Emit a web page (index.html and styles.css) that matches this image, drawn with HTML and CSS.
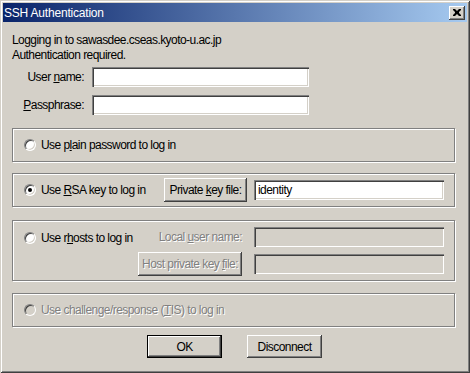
FILE: index.html
```html
<!DOCTYPE html>
<html>
<head>
<meta charset="utf-8">
<link rel="stylesheet" href="styles.css">
</head>
<body>
<div class="window">
  <div class="titlebar">
    <span class="title">SSH Authentication</span>
    <span class="close"><svg width="8" height="7" viewBox="0 0 8 7"><path d="M0 0h2l2 2 2-2h2v1l-2 2v1l2 2v1h-2l-2-2-2 2h-2v-1l2-2v-1l-2-2z" fill="#000"/></svg></span>
  </div>
  <div class="content">
    <div class="info">
      <div>Logging in to sawasdee.cseas.kyoto-u.ac.jp</div>
      <div>Authentication required.</div>
    </div>
    <div class="fields">
      <label class="flabel">User <u>n</u>ame:</label><div class="input"></div>
      <label class="flabel"><u>P</u>assphrase:</label><div class="input"></div>
    </div>
    <div class="group g1">
      <div class="radio-row"><span class="radio"></span><span>Use p<u>l</u>ain password to log in</span></div>
    </div>
    <div class="group g2">
      <div class="radio-row"><span class="radio checked"></span><span>Use <u>R</u>SA key to log in</span></div>
      <div class="g2-right">
        <div class="btn pk"><span>Private <u>k</u>ey file:</span></div>
        <div class="input val">identity</div>
      </div>
    </div>
    <div class="group g3">
      <div class="radio-row rh"><span class="radio"></span><span>Use r<u>h</u>osts to log in</span></div>
      <div class="rh-right">
        <div class="rh-line"><span class="dis lun">Local <u>u</u>ser name:</span><div class="input disabled"></div></div>
        <div class="rh-line"><div class="btn hpk dis"><span>Host private key <u>f</u>ile:</span></div><div class="input disabled"></div></div>
      </div>
    </div>
    <div class="group g4">
      <div class="radio-row"><span class="radio disabledr"></span><span class="dis">Use challenge/response (<u>T</u>IS) to log in</span></div>
    </div>
    <div class="buttons">
      <div class="btn big default"><span>OK</span></div>
      <div class="btn big"><span>Disconnect</span></div>
    </div>
  </div>
</div>
</body>
</html>
```
FILE: styles.css
```css
* { box-sizing: border-box; }
html, body { margin: 0; padding: 0; }
body {
  width: 470px; height: 373px; overflow: hidden;
  font-family: "Liberation Sans", Arial, sans-serif;
  font-size: 12px; color: #000; letter-spacing: -0.55px;
  white-space: nowrap;
}
.window {
  width: 470px; height: 373px;
  background: #d4d0c8;
  box-shadow: inset 1px 1px #d4d0c8, inset -1px -1px #404040, inset 2px 2px #fff, inset -2px -2px #808080;
  padding: 3px 3px 0 3px;
}
.titlebar {
  height: 19px;
  background: linear-gradient(to right, #0a246a, #a6caf0);
  display: flex; align-items: center; justify-content: space-between;
  padding: 0 2px 0 1px;
}
.title { color: #fff; font-size: 12px; letter-spacing: -0.2px; }
.close {
  width: 16px; height: 14px; background: #d4d0c8;
  box-shadow: inset -1px -1px #404040, inset 1px 1px #fff, inset -2px -2px #808080;
  display: flex; align-items: center; justify-content: center; padding-bottom: 1px;
}
.close svg { display: block; }
.content { padding: 0 0 0 9px; }
.info { padding-top: 11px; line-height: 15px; }
.fields {
  display: grid; grid-template-columns: 72px 217px; column-gap: 8px; row-gap: 8px;
  margin-top: 4px; align-items: center;
}
.flabel { text-align: right; }
.input {
  height: 20px; background: #fff;
  box-shadow: inset 1px 1px #808080, inset 2px 2px #404040, inset -1px -1px #fff, inset -2px -2px #d4d0c8;
  padding: 3px 4px; line-height: 14px;
}
.input.disabled { background: #d4d0c8; }
.group {
  width: 443px;
  border: 1px solid #808080;
  box-shadow: inset 1px 1px #fff, 1px 1px #fff;
  padding: 0 10px 0 11px;
}
.g1 { margin-top: 13px; height: 34px; display: flex; align-items: center; }
.g2 { margin-top: 11px; height: 34px; display: flex; align-items: center; justify-content: space-between; }
.g2-right { display: flex; align-items: center; gap: 7px; }
.g3 { margin-top: 13px; height: 61px; display: flex; justify-content: space-between; }
.g4 { margin-top: 12px; height: 34px; display: flex; align-items: center; }
.radio-row { display: flex; align-items: center; gap: 5px; }
.rh { align-self: flex-start; margin-top: 10px; }
.radio {
  width: 12px; height: 12px; border-radius: 50%; flex: none;
  background: #fff; position: relative;
  border: 1px solid; border-color: #808080 #fff #fff #808080;
  box-shadow: inset 1px 1px #404040, inset -1px -1px #d4d0c8;
}
.radio.checked::after {
  content: ""; position: absolute; left: 3px; top: 3px; width: 4px; height: 4px;
  border-radius: 50%; background: #000;
}
.radio.disabledr { background: #d4d0c8; }
.btn {
  background: #d4d0c8; display: flex; align-items: center; justify-content: center;
  box-shadow: inset -1px -1px #404040, inset 1px 1px #fff, inset -2px -2px #808080;
}
.pk { width: 83px; height: 24px; }
.val { width: 190px; height: 20px; }
.dis { color: #808080; text-shadow: 1px 1px #fff; }
.rh-right { display: flex; flex-direction: column; gap: 5px; padding-top: 6px; }
.rh-line { display: flex; align-items: center; justify-content: flex-end; gap: 12px; }
.rh-line .input { width: 190px; height: 20px; }
.lun { text-align: right; }
.hpk { width: 104px; height: 24px; }
.buttons { display: flex; gap: 25px; margin-top: 8px; padding-left: 135px; }
.big { width: 75px; height: 23px; }
.default { box-shadow: inset 0 0 0 1px #000, inset -2px -2px #404040, inset 2px 2px #fff, inset -3px -3px #808080; }
```
